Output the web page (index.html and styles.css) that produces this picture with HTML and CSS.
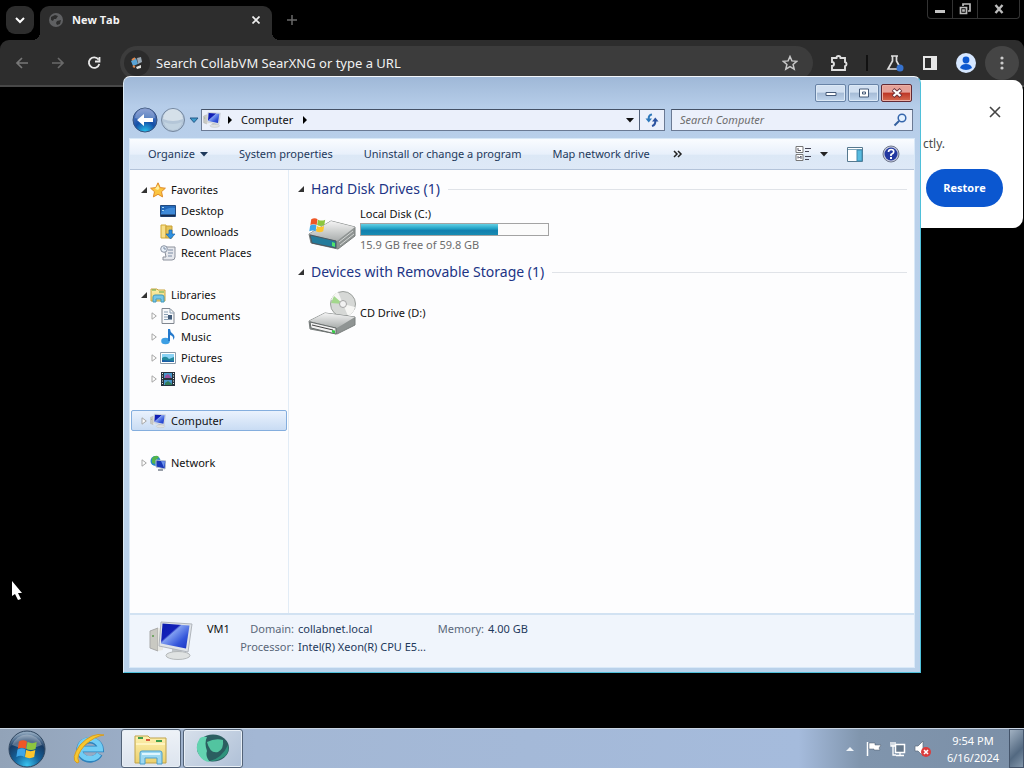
FILE: index.html
```html
<!DOCTYPE html>
<html lang="en">
<head>
<meta charset="utf-8">
<title>Computer</title>
<link rel="stylesheet" href="styles.css">
</head>
<body>
<svg class="defs" aria-hidden="true">
  <defs>
    <linearGradient id="metal" x1="0" y1="0" x2="0" y2="1"><stop offset="0" stop-color="#f4f4f4"/><stop offset="1" stop-color="#a9adac"/></linearGradient>
    <linearGradient id="screen" x1="0" y1="0" x2="1" y2="1"><stop offset="0" stop-color="#0a1cae"/><stop offset=".35" stop-color="#1420b8"/><stop offset=".4" stop-color="#7f9df0"/><stop offset=".7" stop-color="#3355da"/><stop offset="1" stop-color="#1530c0"/></linearGradient>
    <linearGradient id="folder" x1="0" y1="0" x2="0" y2="1"><stop offset="0" stop-color="#fdf1b0"/><stop offset="1" stop-color="#ecd06c"/></linearGradient>
    <radialGradient id="orb" cx=".5" cy=".95" r=".9"><stop offset="0" stop-color="#39c4f0"/><stop offset=".4" stop-color="#14639c"/><stop offset=".75" stop-color="#173a63"/><stop offset="1" stop-color="#8ea6bd"/></radialGradient>
    <radialGradient id="back" cx=".5" cy="1" r=".9"><stop offset="0" stop-color="#29c8f0"/><stop offset=".5" stop-color="#1450a8"/><stop offset="1" stop-color="#5b7bc0"/></radialGradient>
    <symbol id="open" viewBox="0 0 8 8"><path d="M7 1v6H1z" fill="#333"/></symbol>
    <symbol id="closed" viewBox="0 0 8 8"><path d="M2 .8v6.4L6.300 4z" fill="#fff" stroke="#a6a6a6"/></symbol>
    <symbol id="down" viewBox="0 0 8 8"><path d="M0 2h8L4 6.500z" fill="currentColor"/></symbol>
    <symbol id="pc" viewBox="0 0 44 40">
      <path d="M1 10l8-3v23l-8-3z" fill="#c9c9c2" stroke="#aaa"/><path d="M9 7l5 1v21l-5 1z" fill="#e9e9e4"/><circle cx="4" cy="15" r="1" fill="#5a9a4a"/>
      <path d="M23 27l9 2 2 6H23z" fill="#bfc4c8"/><ellipse cx="29" cy="34.500" rx="12" ry="4" fill="#dfe2e2" stroke="#b4b8ba"/>
      <path d="M12 1l31 2-4 28-29-6z" fill="#e0e4e8" stroke="#b0b5bc"/><path d="M13.500 2.500l27 2-3.500 23-25-5z" fill="url(#screen)"/>
    </symbol>
    <symbol id="winflag" viewBox="0 0 20 20">
      <path d="M2.500 3q4-2 7 0l-1 6.500Q5 7.500 1.500 9.500z" fill="#ee5726"/><path d="M10 3.500q4 2 8 0l-1 6q-4 2-8 0z" fill="#8dc63f"/>
      <path d="M1.300 10q4-2 7 0l-1 6.500q-3-2-7 0z" fill="#3ea6e8"/><path d="M8.800 10.500q4 2 8 0l-1 6q-4 2-8 0z" fill="#fdc62e"/>
    </symbol>
  </defs>
</svg>

<main class="desktop">
  <section class="browser" aria-label="Browser">
    <div class="tabstrip">
      <button class="tab-search" aria-label="Search tabs"><svg width="10" height="8" viewBox="0 0 10 8"><path d="M1 2l4 4 4-4" fill="none" stroke="#fff" stroke-width="2"/></svg></button>
      <div class="tab">
        <svg width="16" height="16" viewBox="0 0 16 16"><circle cx="8" cy="8" r="7" fill="#5f6062"/><path d="M3 5l4-2 3 1-2 3H6l-1 2-2-1zM9 9l4-1-1 4-3 1-1-2z" fill="#2d2d2d"/></svg>
        <span class="tab-title">New Tab</span>
        <button class="tab-close" aria-label="Close tab"><svg width="8" height="8" viewBox="0 0 8 8"><path d="M0.500.5l7 7m0-7l-7 7" stroke="#eee" stroke-width="1.700"/></svg></button>
      </div>
      <button class="new-tab" aria-label="New tab"><svg width="12" height="12" viewBox="0 0 12 12"><path d="M6 1v10M1 6h10" stroke="#696969" stroke-width="1.500"/></svg></button>
      <div class="caption">
        <button aria-label="Minimize browser"><svg width="12" height="12" viewBox="0 0 12 12"><path d="M1 7h10v3H1z" fill="#c4c4c4"/></svg></button>
        <button aria-label="Restore browser"><svg width="12" height="12" viewBox="0 0 12 12"><path d="M4 3V1h7v7H9M1.500 4.500h6v6h-6zM4 7h1v1H4z" fill="none" stroke="#bbb" stroke-width="1.700"/></svg></button>
        <button class="caption-close" aria-label="Close browser"><svg width="10" height="10" viewBox="0 0 10 10"><path d="M1.500 1l7 8m0-8l-7 8" stroke="#bcbcbc" stroke-width="2.400"/></svg></button>
      </div>
    </div>
    <div class="browser-bar">
      <button aria-label="Back"><svg width="14" height="14" viewBox="0 0 14 14"><path d="M13 7H2m5-5L2 7l5 5" fill="none" stroke="#777" stroke-width="1.700"/></svg></button>
      <button aria-label="Forward"><svg width="14" height="14" viewBox="0 0 14 14"><path d="M1 7h11M7 2l5 5-5 5" fill="none" stroke="#696969" stroke-width="1.700"/></svg></button>
      <button aria-label="Reload"><svg width="14" height="14" viewBox="0 0 14 14"><path d="M11.500 3.500A5.300 5.300 0 1 0 12.300 8M12.500 1v4.500H8" fill="none" stroke="#e8e8e8" stroke-width="1.800"/></svg></button>
      <div class="omnibox">
        <span class="engine"><svg width="16" height="16" viewBox="0 0 16 16"><path d="M2 6l5-3 2 6-5 2z" fill="#5aa3d4"/><path d="M8 3l4-1 1 5-4 2z" fill="#9aa7b2"/><path d="M3 5l3-2M4 11l2 1" stroke="#e0874c" stroke-width="2"/><path d="M7 12l5-2v3l-4 1z" fill="#e4e4e0"/></svg></span>
        <input type="text" aria-label="Address" placeholder="Search CollabVM SearXNG or type a URL">
        <button aria-label="Bookmark"><svg width="16" height="16" viewBox="0 0 16 16"><path d="M8 1.500l1.900 4.400 4.800.4-3.600 3.100 1.100 4.700L8 11.600l-4.200 2.500 1.100-4.700L1.300 6.300l4.800-.4z" fill="none" stroke="#c8c8c8" stroke-width="1.500"/></svg></button>
      </div>
      <div class="actions">
        <button aria-label="Extensions"><svg width="18" height="18" viewBox="0 0 18 18"><path d="M2 4h4.500a2 2 0 0 1 4 0H15v4a2.200 2.200 0 0 1 0 4.200V16H2v-4a2 2 0 0 0 0-4z" fill="none" stroke="#dedede" stroke-width="1.900"/></svg></button>
        <span class="divider"></span>
        <button aria-label="Labs"><svg width="18" height="18" viewBox="0 0 18 18"><path d="M5 2h7M6.500 2v5L2 15h13l-4.500-8V2" fill="none" stroke="#dedede" stroke-width="1.700"/><circle cx="14" cy="14" r="3.500" fill="#3672ce"/></svg></button>
        <button aria-label="Side panel"><svg width="16" height="16" viewBox="0 0 16 16"><path d="M2 2h12v12H2z" fill="none" stroke="#e6e6e6" stroke-width="2"/><path d="M9 2h5v12H9z" fill="#e6e6e6"/></svg></button>
        <button aria-label="Profile"><svg width="20" height="20" viewBox="0 0 20 20"><circle cx="10" cy="10" r="10" fill="#d6e7ff"/><circle cx="10" cy="7" r="3.400" fill="#0b57d0"/><path d="M4 15q1-4 6-4t6 4q-6 4-12 0z" fill="#0b57d0"/></svg></button>
        <button class="menu-button" aria-label="Menu"><svg width="4" height="16" viewBox="0 0 4 16"><circle cx="2" cy="3" r="1.600" fill="#ccc"/><circle cx="2" cy="8" r="1.600" fill="#ccc"/><circle cx="2" cy="13" r="1.600" fill="#ccc"/></svg></button>
      </div>
    </div>
  </section>

  <aside class="bubble">
    <button class="bubble-close" aria-label="Dismiss"><svg width="12" height="12" viewBox="0 0 12 12"><path d="M1 1l10 10m0-10L1 11" stroke="#444" stroke-width="1.600"/></svg></button>
    <p>ctly.</p>
    <button class="restore">Restore</button>
  </aside>

  <section class="explorer" aria-label="Computer">
    <div class="titlebar">
      <button aria-label="Minimize"><svg width="12" height="8" viewBox="0 0 12 8"><path d="M1 3.500h10v3H1z" fill="#fff" stroke="#455a78"/></svg></button>
      <button aria-label="Maximize"><svg width="12" height="10" viewBox="0 0 12 10"><path d="M1.500 1h9v8h-9z" fill="#fff" stroke="#455a78"/><path d="M4.500 4h3v2h-3z" fill="none" stroke="#455a78"/></svg></button>
      <button class="close" aria-label="Close"><svg width="12" height="10" viewBox="0 0 12 10"><path d="M2 1.500l8 7m0-7l-8 7" stroke="#6b3038" stroke-width="4"/><path d="M2.500 2l7 6m0-6l-7 6" stroke="#fff" stroke-width="2.300"/></svg></button>
    </div>
    <div class="navrow">
      <div class="history">
        <button aria-label="Back"><svg width="26" height="26" viewBox="0 0 26 26"><circle cx="13" cy="13" r="12" fill="url(#back)" stroke="#37527e"/><path d="M3 11a10 10 0 0 1 20 0q-10 4-20 0z" fill="#fff" opacity=".25"/><path d="M5 13l7-6v4h9v4h-9v4z" fill="#fff"/></svg></button>
        <button aria-label="Forward"><svg width="26" height="26" viewBox="0 0 26 26"><circle cx="13" cy="13" r="11.500" fill="#b4c6d8" stroke="#74869e"/><path d="M3 12a10 10 0 0 1 20 0q-10 4-20 0z" fill="#d5e0e9"/><path d="M4 15q9 4 18 0-2 8-9 8t-9-8z" fill="#c2d3e1"/></svg></button>
        <button class="recent" aria-label="Recent pages"><svg width="10" height="10" viewBox="0 0 10 10"><path d="M1 3h8L5 7.500z" fill="#3b9bcc" stroke="#275a88"/></svg></button>
      </div>
      <div class="address">
        <svg width="18" height="16"><use href="#pc"/></svg>
        <svg class="crumb" width="6" height="8" viewBox="0 0 6 8"><path d="M1 0l4 4-4 4z"/></svg>
        <a href="#computer">Computer</a>
        <svg class="crumb" width="6" height="8" viewBox="0 0 6 8"><path d="M1 0l4 4-4 4z"/></svg>
        <button class="drop" aria-label="Previous locations"><svg width="8" height="8"><use href="#down"/></svg></button>
        <button class="refresh" aria-label="Refresh"><svg width="14" height="14" viewBox="0 0 14 14"><path d="M7 1.500Q3.500 2 3.700 6" fill="none" stroke="#2e79bb" stroke-width="2"/><path d="M.5 5.500h6.500L3.700 9.500z" fill="#2e79bb"/><path d="M7 13q3.500-1 3.300-5" fill="none" stroke="#2a52a0" stroke-width="2"/><path d="M7 8.500h6.500L10.300 4.500z" fill="#2a52a0"/></svg></button>
      </div>
      <div class="search">
        <input type="text" aria-label="Search Computer" placeholder="Search Computer">
        <svg width="14" height="14" viewBox="0 0 14 14"><circle cx="9" cy="5" r="3.800" fill="#e4f1ff" stroke="#3566ac" stroke-width="1.500"/><path d="M6 8l-4.500 4.500" stroke="#35609f" stroke-width="2"/></svg>
      </div>
    </div>

    <div class="client">
      <div class="commands">
        <button>Organize <svg width="8" height="8"><use href="#down"/></svg></button>
        <button>System properties</button>
        <button>Uninstall or change a program</button>
        <button>Map network drive</button>
        <button class="more" aria-label="More commands"><svg width="10" height="8" viewBox="0 0 10 8"><path d="M1 1l3 3-3 3m4-6l3 3-3 3" fill="none" stroke="#222" stroke-width="1.500"/></svg></button>
        <div class="view-tools">
          <button class="view" aria-label="Change view"><svg width="17" height="16" viewBox="0 0 17 16"><path d="M1 .5h7v6H1zM1 8.500h7v6H1z" fill="#fff" stroke="#777"/><path d="M3 2v2.500h3M3 12.500v-2l1.500 1.500L6 10v3" fill="none" stroke="#556"/><path d="M10 2.500h6M10 5.500h4M10 10.500h6M10 13.500h4" stroke="#445"/></svg><svg width="8" height="8"><use href="#down"/></svg></button>
          <button aria-label="Preview pane"><svg width="16" height="15" viewBox="0 0 16 15"><path d="M.5.500h15v14H.5z" fill="#fff" stroke="#56788e"/><path d="M1 2.500h14" stroke="#7fa3b8"/><path d="M10 3h5v11h-5z" fill="#58bbdf" stroke="#3e8aae"/></svg></button>
          <button aria-label="Help"><svg width="18" height="18" viewBox="0 0 18 18"><circle cx="9" cy="9" r="8" fill="#c5cadb" stroke="#70788e"/><circle cx="9" cy="9" r="6.500" fill="#2338a0"/><path d="M6.500 7q0-2.500 2.700-2.500T11.700 7Q11.700 8.300 9 9.500V11" fill="none" stroke="#fff" stroke-width="1.700"/><path d="M8 12h2v2H8z" fill="#fff"/></svg></button>
        </div>
      </div>

      <div class="panes">
        <nav class="tree" aria-label="Folders">
          <ul>
            <li><a href="#favorites"><svg width="8" height="8"><use href="#open"/></svg><svg width="16" height="16" viewBox="0 0 16 16"><path d="M8 .8l2.200 4.800 5.200.6-3.900 3.500 1.100 5.200L8 12.300l-4.600 2.600 1.100-5.200L.6 6.200l5.200-.6z" fill="#fbc540" stroke="#e08a28"/><path d="M8 3l1.400 3.500L8 8 5 7z" fill="#fff0a0"/></svg>Favorites</a>
              <ul>
                <li><a href="#desktop"><svg width="16" height="16" viewBox="0 0 16 16"><path d="M.5 2.500h15v11H.5z" fill="#2469ba" stroke="#234b80"/><path d="M1 10Q7 4 15 5v8H1z" fill="#3f8ad8"/><path d="M1 12.500h14" stroke="#172c50" stroke-width="2"/><path d="M2 4h2v1H2zm0 3h2v1H2z" fill="#a8d8f4"/></svg>Desktop</a></li>
                <li><a href="#downloads"><svg width="16" height="16" viewBox="0 0 16 16"><path d="M1 1h5v13H1z" fill="#f7df8a" stroke="#d2a937"/><path d="M6 2h6v12H6z" fill="#e5c558" stroke="#c99f35"/><path d="M9 6h3v4h3l-4.500 5L6 10h3z" fill="#2f91e0" stroke="#1a66ad" stroke-width=".7"/></svg>Downloads</a></li>
                <li><a href="#recent"><svg width="16" height="16" viewBox="0 0 16 16"><path d="M4 2h11v10q0 3-3 3H3v-3h3z" fill="#e6e8ed" stroke="#8c919c"/><circle cx="4" cy="4" r="3.300" fill="#e8f0f8" stroke="#8991a2"/><path d="M4 2v2h2M8 5h5M8 8h5M8 11h4" fill="none" stroke="#7b8ba3"/></svg>Recent Places</a></li>
              </ul>
            </li>
            <li><a href="#libraries"><svg width="8" height="8"><use href="#open"/></svg><svg width="16" height="16" viewBox="0 0 16 16"><path d="M1 2h6l1 1h7v11H1z" fill="url(#folder)" stroke="#c9a441"/><path d="M2 3h4M9 5h5" stroke="#5ba546"/><path d="M3 15V10q0-2 2-2h7q2 0 2 2v5h-3v-3H6v3z" fill="#75c6e8" stroke="#429abd"/></svg>Libraries</a>
              <ul>
                <li><a href="#documents"><svg width="8" height="8"><use href="#closed"/></svg><svg width="16" height="16" viewBox="0 0 16 16"><path d="M2 .5h8l4 4v11H2z" fill="#f7f8fa" stroke="#80868f"/><path d="M10 1v4h4M4 4h4M4 6.500h4M4 9h4M4 11.500h8" fill="none" stroke="#8ba0b4"/><path d="M8 7h4v4H8z" fill="#425c7a"/></svg>Documents</a></li>
                <li><a href="#music"><svg width="8" height="8"><use href="#closed"/></svg><svg width="16" height="16" viewBox="0 0 16 16"><ellipse cx="5.500" cy="12" rx="4.300" ry="3.300" fill="#3d9fe4"/><path d="M8 0h2q0 3 3 5 3 3 0 6 1-4-3-5v6H8z" fill="#2479cc"/></svg>Music</a></li>
                <li><a href="#pictures"><svg width="8" height="8"><use href="#closed"/></svg><svg width="16" height="16" viewBox="0 0 16 16"><path d="M.5 2.500h15v11H.5z" fill="#fff" stroke="#8c9caa"/><path d="M2 4h12v8H2z" fill="#8ad2f4"/><path d="M2 8q4-3 7 1l5-2v5H2z" fill="#23899c"/><path d="M2 10l12 1v1H2z" fill="#1b5da6"/></svg>Pictures</a></li>
                <li><a href="#videos"><svg width="8" height="8"><use href="#closed"/></svg><svg width="16" height="16" viewBox="0 0 16 16"><path d="M1 1h14v14H1z" fill="#26323d"/><path d="M4 2h8v5H4zM4 9h8v5H4z" fill="#4796c8"/><path d="M5 5l3-2 3 3v1H5z" fill="#9a519d"/><path d="M5 12l3-2 4 3v1H5z" fill="#327b57"/><path d="M2.500 2v12M13.500 2v12" stroke="#eee" stroke-dasharray="1 1.500"/></svg>Videos</a></li>
              </ul>
            </li>
            <li><a class="selected" href="#computer"><svg width="8" height="8"><use href="#closed"/></svg><svg width="16" height="16"><use href="#pc"/></svg>Computer</a></li>
            <li><a href="#network"><svg width="8" height="8"><use href="#closed"/></svg><svg width="16" height="16" viewBox="0 0 16 16"><circle cx="5.500" cy="6" r="5" fill="#2487c7"/><path d="M2 3q4-4 7-1L6 5 5 9 2 8z" fill="#54b44a"/><path d="M6 5l10 1-1 8-9-2z" fill="#1938b8" stroke="#b6c1cd"/><path d="M11 6l4 .5-1 6z" fill="#6d93ec"/><path d="M8 15h5" stroke="#989ea8" stroke-width="2"/></svg>Network</a></li>
          </ul>
        </nav>

        <div class="files">
          <h2><svg width="8" height="8"><use href="#open"/></svg>Hard Disk Drives (1)</h2>
          <div class="drive">
            <svg width="48" height="48" viewBox="0 0 48 48"><path d="M1 28l22-13 24 6v9L30 43 3 37z" fill="#8f9493" stroke="#7b807f"/><path d="M1 28l22-13 24 6-18 14z" fill="url(#metal)"/><path d="M2 29l26 6v7L4 37z" fill="#247b9b" stroke="#4c5760"/><path d="M24 36l3 1v4l-3-1z" fill="#50e46c"/><path d="M31 36l14-11m-13 14l14-11" stroke="#d3d6d4"/><svg x="1" y="10" width="18" height="19"><use href="#winflag"/></svg></svg>
            <div class="drive-info">
              <span class="drive-name">Local Disk (C:)</span>
              <div class="meter" role="meter" aria-label="Used space" aria-valuenow="73" aria-valuemin="0" aria-valuemax="100"><div class="used" style="width:73%"></div></div>
              <span class="free">15.9 GB free of 59.8 GB</span>
            </div>
          </div>
          <h2><svg width="8" height="8"><use href="#open"/></svg>Devices with Removable Storage (1)</h2>
          <div class="drive">
            <svg width="48" height="48" viewBox="0 0 48 48"><circle cx="35" cy="15" r="12.500" fill="#d6d8d6" stroke="#9b9f9c"/><path d="M35 15l-12-4q2-6 7-8zM35 15l12 3q-1 6-7 9z" fill="#f6f6f4"/><path d="M35 15l-12-1 3-7z" fill="#a3d78c"/><circle cx="35" cy="15" r="3.500" fill="#f2f2f2" stroke="#a4a4a4"/><path d="M1 32l16-8 30 4v8L29 45 2 40z" fill="#8f9493" stroke="#7b807f"/><path d="M1 32l16-8 30 4-18 11z" fill="url(#metal)"/><path d="M2 33l26 6v6L3 39z" fill="#f1f1f1" stroke="#656a69"/><path d="M4 36l21 5" stroke="#444"/><path d="M24 41l3 .5v3l-3-1z" fill="#37c847"/></svg>
            <span class="drive-name">CD Drive (D:)</span>
          </div>
        </div>
      </div>

      <div class="details">
        <svg width="44" height="40"><use href="#pc"/></svg>
        <dl>
          <dd class="host">VM1</dd>
          <dt>Domain:</dt><dd>collabnet.local</dd>
          <dt>Memory:</dt><dd>4.00 GB</dd>
          <dt class="second">Processor:</dt><dd>Intel(R) Xeon(R) CPU E5...</dd>
        </dl>
      </div>
    </div>
  </section>
  <svg class="cursor" width="12" height="20" viewBox="0 0 12 20"><path d="M0 0v15l3-2 3 6 3-1-3-6h4z" fill="#fff"/></svg>
</main>

<footer class="taskbar">
  <button class="start" aria-label="Start"><svg width="38" height="38" viewBox="0 0 38 38"><circle cx="19" cy="19" r="18" fill="url(#orb)" stroke="#30465f"/><path d="M4 15a16 16 0 0 1 30 0q-15 7-30 0z" fill="#fff" opacity=".28"/><svg x="8" y="8" width="23" height="23"><use href="#winflag"/></svg></svg></button>
  <button class="task" aria-label="Internet Explorer"><svg width="36" height="34" viewBox="0 0 36 34"><path d="M28.500 22A10.500 9.500 0 1 1 29.500 17H11" fill="none" stroke="#2d83bd" stroke-width="6.500"/><path d="M28 22A10.500 9.500 0 1 1 29.500 17H11" fill="none" stroke="#71cdf5" stroke-width="5"/><path d="M6 31Q-1 27 9 13 21 0 33 3 24 4 14 13 4 24 8 30z" fill="#f8c72e" stroke="#d79d22"/></svg></button>
  <button class="task open folder" aria-label="File Explorer"><svg width="34" height="32" viewBox="0 0 34 32"><path d="M1 3h13l2 2h16v25H1z" fill="url(#folder)" stroke="#c0a34b"/><path d="M4 5h5M22 8h6" stroke="#3f9d4a" stroke-width="2"/><path d="M12 7h4" stroke="#d8593b" stroke-width="2"/><path d="M2 11h29" stroke="#fff4bf" stroke-width="2"/><path d="M6 31V20q0-2 2-2h18q2 0 2 2v11h-5v-6H11v6z" fill="#9cd8f1" stroke="#4b9ecb"/><path d="M8 21h18" stroke="#dff6ff" stroke-width="2"/></svg></button>
  <button class="task open" aria-label="Browser"><svg width="34" height="32" viewBox="0 0 34 32"><ellipse cx="17" cy="15" rx="16" ry="13.500" fill="#2b5e60"/><path d="M4 5Q-2 14 3 22q4 7 11 7-5-6-3-11Q8 10 11 4 7 3 4 5z" fill="#63d3b0"/><path d="M11 9q8-4 16-2 1 9-5 12-8 2-11-10z" fill="#52c4a0"/><path d="M32 12q2 9-6 13-6 4-12 3 12-3 18-16z" fill="#2f937c"/></svg></button>
  <div class="tray">
    <button aria-label="Show hidden icons"><svg width="8" height="8" viewBox="0 0 8 8"><path d="M0 6l4-4 4 4z" fill="#eef3f8"/></svg></button>
    <button aria-label="Action Center"><svg width="16" height="16" viewBox="0 0 16 16"><path d="M1.500 1v14" stroke="#fff" stroke-width="1.500"/><path d="M3 2h6v2h6l-2 3 1 2H8V8H3z" fill="#fff" stroke="#4e5b6a" stroke-width=".5"/></svg></button>
    <button aria-label="Network"><svg width="16" height="16" viewBox="0 0 16 16"><path d="M5.500 3.500h9v8h-9z" fill="#66788b" stroke="#fff" stroke-width="1.500"/><path d="M10 12v2M6 14.500h8M1 1v4h4V1M3 1v13h3" fill="none" stroke="#fff" stroke-width="1.300"/></svg></button>
    <button aria-label="Volume muted"><svg width="18" height="18" viewBox="0 0 18 18"><path d="M1 6h3l5-5v15l-5-5H1z" fill="#fff" stroke="#5c6c7d" stroke-width=".7"/><circle cx="12" cy="12" r="5" fill="#dc3c3c"/><path d="M10 10l4 4m0-4l-4 4" stroke="#fff" stroke-width="1.600"/></svg></button>
    <button class="clock"><span>9:54 PM</span><span>6/16/2024</span></button>
    <button class="peek" aria-label="Show desktop"></button>
  </div>
</footer>
</body>
</html>
```
FILE: styles.css
```css
* { box-sizing: border-box; }
body { margin: 0; height: 100vh; display: flex; flex-direction: column; overflow: hidden; background: #000; font: 12px/16px "Noto Sans", "Open Sans", sans-serif; color: #111; }
.defs { position: absolute; width: 0; height: 0; }
button { padding: 0; border: 0; background: none; font: inherit; color: inherit; display: flex; align-items: center; justify-content: center; flex: none; }
input { border: 0; background: none; font: inherit; outline: 0; min-width: 0; flex: 1; padding: 0; }
a { color: inherit; text-decoration: none; }
svg { display: block; flex: none; }
.desktop { position: relative; flex: 1; }

/* Browser */
.tabstrip { height: 40px; display: flex; align-items: flex-end; padding-left: 6px; }
.tab-search { width: 28px; height: 28px; border-radius: 9px; background: #2d2d2d; align-self: center; }
.tab { position: relative; width: 232px; height: 34px; margin-left: 6px; padding: 0 12px 6px 8px; border-radius: 9px 9px 0 0; background: #2d2d2d; display: flex; align-items: center; gap: 8px; color: #f4f4f4; font: 700 11px/16px "Open Sans", sans-serif; }
.tab::before, .tab::after { content: ""; position: absolute; bottom: 0; width: 8px; height: 8px; }
.tab::before { left: -8px; background: radial-gradient(circle at 0 0, transparent 8px, #2d2d2d 8px); }
.tab::after { right: -8px; background: radial-gradient(circle at 100% 0, transparent 8px, #2d2d2d 8px); }
.tab-title { flex: 1; }
.new-tab { width: 40px; height: 40px; }
.caption { margin-left: auto; margin-right: 4px; align-self: flex-start; display: flex; border: 1px solid #333; border-top: 0; border-radius: 0 0 4px 4px; }
.caption button { width: 25px; height: 18px; border-right: 1px solid #333; }
.caption .caption-close { width: 41px; border: 0; }
.browser-bar { height: 47px; padding-left: 8px; display: flex; align-items: center; background: #2d2d2d; border-bottom: 2px solid #484848; border-radius: 9px 9px 0 0; }
.browser-bar > button { width: 28px; height: 28px; margin-right: 8px; }
.omnibox { flex: 1; height: 34px; margin-left: 4px; padding: 0 15px 0 4px; display: flex; align-items: center; border-radius: 17px; background: #3c3c3c; }
.engine { width: 26px; height: 26px; margin-right: 6px; border-radius: 13px; background: #2b2b2b; display: grid; place-items: center; }
.omnibox input { font: 13px "Noto Sans", sans-serif; color: #f1f1f1; }
.omnibox input::placeholder { color: #f1f1f1; opacity: 1; }
.actions { display: flex; align-items: center; gap: 18px; padding: 0 5px 0 17px; }
.divider { width: 2px; height: 16px; background: #111; }
.menu-button { width: 34px; height: 34px; border-radius: 17px; background: #454545; margin-left: -9px; }
.bubble { position: absolute; right: 1px; top: 80px; width: 120px; height: 148px; padding: 26px 20px 20px; display: flex; flex-direction: column; background: #fff; border-radius: 0 10px 10px 0; color: #4b4b4b; font-size: 12px; }
.bubble-close { align-self: flex-end; margin-right: 2px; }
.bubble p { margin: 18px 0 17px; }
.restore { width: 77px; height: 38px; margin-left: 3px; border-radius: 19px; background: #0b57d0; color: #fff; font: 700 11px/16px "Open Sans", sans-serif; }

/* Explorer window */
.explorer { position: absolute; inset: 76px 103px 55px 123px; padding: 0 6px 5px; display: flex; flex-direction: column; border: 1px solid #4fc0da; border-top-color: #f3f7fb; border-left-color: #dceaf4; border-radius: 7px 7px 0 0; background: linear-gradient(#9fb8d7 0, #b6cde9 30px, #bbd1eb 95px, #b9d1ea); font-size: 11px; }
.titlebar { height: 32px; padding: 7px 2px 0; display: flex; justify-content: flex-end; align-items: flex-start; gap: 2px; }
.titlebar button { width: 31px; height: 18px; border: 1px solid #6883a6; border-radius: 2px; background: linear-gradient(#d2e0f1 45%, #a5bbd6 50%, #c1d6ed); box-shadow: inset 0 0 0 1px #dce9f6; }
.titlebar .close { border-color: #622a35; background: linear-gradient(#e5a198 45%, #bd3525 50%, #d66b50); box-shadow: inset 0 0 0 1px #edb0a4; }
.navrow { height: 22px; margin-bottom: 8px; padding: 0 1px 0 2px; display: flex; align-items: center; }
.history { display: flex; align-items: center; gap: 2px; width: 69px; }
.recent { width: 12px; height: 20px; }
.address { flex: 1; height: 22px; padding-left: 1px; display: flex; align-items: center; border: 1px solid #6b7a94; border-top-color: #445166; background: #ebf0fb; }
.crumb { margin: 0 8px 0 6px; }
.address a { margin-right: 3px; }
.drop { margin-left: auto; width: 18px; height: 20px; }
.refresh { width: 25px; height: 20px; border-left: 1px solid #53627b; }
.search { width: 242px; height: 22px; margin-left: 6px; padding: 0 5px 0 8px; display: flex; align-items: center; border: 1px solid #6b7a94; border-top-color: #445166; background: #ebf0fb; }
.search input { font-style: italic; color: #6d6d6d; }
.search input::placeholder { color: #6d6d6d; opacity: 1; }
.client { flex: 1; min-height: 0; display: flex; flex-direction: column; background: #fdfdfe; box-shadow: 0 0 0 1px #d9e9f8; }
.commands { height: 31px; padding: 0 14px 0 18px; display: flex; align-items: center; gap: 31px; color: #1e395b; background: linear-gradient(#fafcff, #e8f0fb 50%, #dce8f6 55%, #dee9f7); border-bottom: 1px solid #b3c3d9; }
.commands button { gap: 5px; }
.commands .more { margin-left: -8px; }
.view-tools { margin-left: auto; display: flex; align-items: center; gap: 19px; }
.commands .view { gap: 8px; color: #222; }
.panes { flex: 1; min-height: 0; display: flex; }
.tree { width: 159px; padding: 9px 1px 0; border-right: 1px solid #e2ecf6; }
.tree ul { margin: 0; padding: 0; list-style: none; }
.tree > ul { display: flex; flex-direction: column; gap: 21px; }
.tree a { height: 21px; padding-left: 8px; display: flex; align-items: center; gap: 2px; border: 1px solid transparent; border-radius: 2px; }
.tree a svg:last-of-type { margin-right: 3px; }
.tree ul ul a { padding-left: 18px; }
.tree ul ul a svg:only-of-type { margin-left: 10px; }
.tree .selected { border-color: #84aede; background: linear-gradient(#eaf2fd, #c9dcf4); }
.files { flex: 1; padding: 9px 7px 0 8px; }
.files h2 { margin: 0; height: 20px; display: flex; align-items: center; gap: 6px; font-size: 14px; line-height: 20px; font-weight: 400; color: #213485; }
.files h2::after { content: ""; flex: 1; height: 1px; margin-left: 2px; background: #e0e3e8; }
.drive { height: 63px; padding: 0 0 2px 11px; display: flex; align-items: center; gap: 4px; }
.drive-info { width: 189px; }
.drive-info span { display: block; }
.meter { height: 13px; margin: 1px 0; border: 1px solid #a3a3a3; background: #fbfbfb; }
.used { height: 100%; background: linear-gradient(#64d0e4, #24a4c7 40%, #127fae 60%, #188cb2); }
.free { color: #6d6d6d; }
.details { height: 54px; padding: 0 19px; display: flex; align-items: center; gap: 14px; background: #f0f5fc; border-top: 2px solid #d2e2f2; }
.details dl { margin: 0; padding-bottom: 6px; display: grid; grid-template-columns: 28px 55px 129px 53px auto; line-height: 18px; column-gap: 4px; }
.details dt { text-align: right; color: #5a6779; white-space: nowrap; }
.details dd { margin: 0; white-space: nowrap; color: #1e395b; }
.details .host { color: #111; }
.details .second { grid-column: 2; }
.cursor { position: absolute; left: 12px; top: 581px; }

/* Taskbar */
.taskbar { height: 40px; padding-left: 8px; display: flex; align-items: center; gap: 2px; background: linear-gradient(90deg, #92a3b8, #a3b7d4 25%, #a5bbdc 78%, #8095ad 84%, #7b8fa7); border-top: 1px solid #c9d5e3; color: #fff; font-size: 11px; }
.start { width: 38px; margin-right: 11px; }
.task { width: 60px; height: 39px; border: 1px solid transparent; border-radius: 3px; }
.task.open { border-color: #536378; background: linear-gradient(135deg, #d7e0eb, #afc0d7); box-shadow: inset 0 0 0 1px #e8eff6; }
.task.folder { background: linear-gradient(#eef2f7, #dce4ee); }
.tray { margin-left: auto; height: 100%; display: flex; align-items: center; gap: 8px; }
.tray > button:first-child { margin-right: 4px; }
.clock { flex-direction: column; width: 68px; margin-left: -1px; line-height: 17px; }
.peek { width: 15px; height: 100%; margin-left: -6px; border: 1px solid #44546a; background: linear-gradient(135deg, #a1b1c2, #536981 60%, #8397ab); }
```
